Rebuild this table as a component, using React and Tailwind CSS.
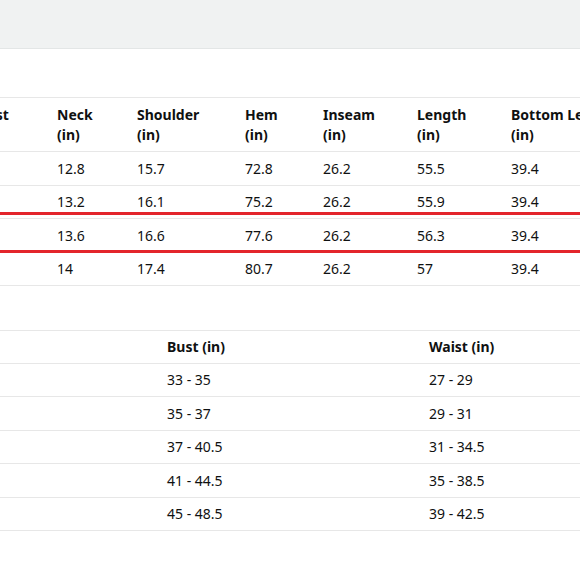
// Size chart: garment measurements + body measurements, cropped view.

import React from 'react'

const garmentHead = ['Waist', 'Neck', 'Shoulder', 'Hem', 'Inseam', 'Length', 'Bottom Length']

const garmentRows = [
  { h: 'h-[34px]', cells: ['28.3', '12.8', '15.7', '72.8', '26.2', '55.5', '39.4'] },
  { h: 'h-[33px]', cells: ['30', '13.2', '16.1', '75.2', '26.2', '55.9', '39.4'] },
  { h: 'h-[34px]', cells: ['32', '13.6', '16.6', '77.6', '26.2', '56.3', '39.4'] },
  { h: 'h-[33px]', cells: ['35.4', '14', '17.4', '80.7', '26.2', '57', '39.4'] },
]

const bodyRows = [
  { h: 'h-[33px]', cells: ['S', '33 - 35', '27 - 29'] },
  { h: 'h-[34px]', cells: ['M', '35 - 37', '29 - 31'] },
  { h: 'h-[33px]', cells: ['L', '37 - 40.5', '31 - 34.5'] },
  { h: 'h-[34px]', cells: ['XL', '41 - 44.5', '35 - 38.5'] },
  { h: 'h-[33px]', cells: ['XXL', '45 - 48.5', '39 - 42.5'] },
]

const garmentCols = 'grid grid-cols-[87px_80px_108px_78px_94px_94px_160px]'
const bodyCols    = 'grid grid-cols-[262px_262px_262px]'

export default function App() {
  return (
    <div
      className="w-[580px] h-[580px] overflow-hidden bg-white text-[#0f1111] text-[14px] leading-[20px]"
      style={{ fontFamily: '"Noto Sans", "Open Sans", sans-serif' }}
    >
      {/* ── Top bar ── */}
      <div className="h-[49px] bg-[#f0f2f2] border-b border-[#e3e6e6]" />

      {/* ── Garment measurements ── */}
      <div className="relative mt-[48px] overflow-hidden">
        <div className="-ml-[30px] w-[800px]">
          <div className={`${garmentCols} h-[55px] items-center border-y border-[#e7e7e7] font-bold`}>
            {garmentHead.map((t) => (
              <div key={t} className="whitespace-nowrap">
                {t}
                <br />
                (in)
              </div>
            ))}
          </div>
          {garmentRows.map((r, i) => (
            <div key={i} className={`${garmentCols} ${r.h} items-center border-b border-[#e7e7e7]`}>
              {r.cells.map((c, j) => (
                <div key={j}>{c}</div>
              ))}
            </div>
          ))}
        </div>

        {/* red highlight marks */}
        <div className="absolute left-0 right-0 top-[115px] h-[3px] bg-[#e3252b]" />
        <div className="absolute left-0 right-0 top-[153px] h-[3px] bg-[#e3252b]" />
      </div>

      {/* ── Body measurements ── */}
      <div className="mt-[44px] overflow-hidden">
        <div className="-ml-[95px] w-[800px]">
          <div className={`${bodyCols} h-[34px] items-center border-y border-[#e7e7e7] font-bold`}>
            <div>Size</div>
            <div>Bust (in)</div>
            <div>Waist (in)</div>
          </div>
          {bodyRows.map((r, i) => (
            <div key={i} className={`${bodyCols} ${r.h} items-center border-b border-[#e7e7e7]`}>
              {r.cells.map((c, j) => (
                <div key={j}>{c}</div>
              ))}
            </div>
          ))}
        </div>
      </div>
    </div>
  )
}
